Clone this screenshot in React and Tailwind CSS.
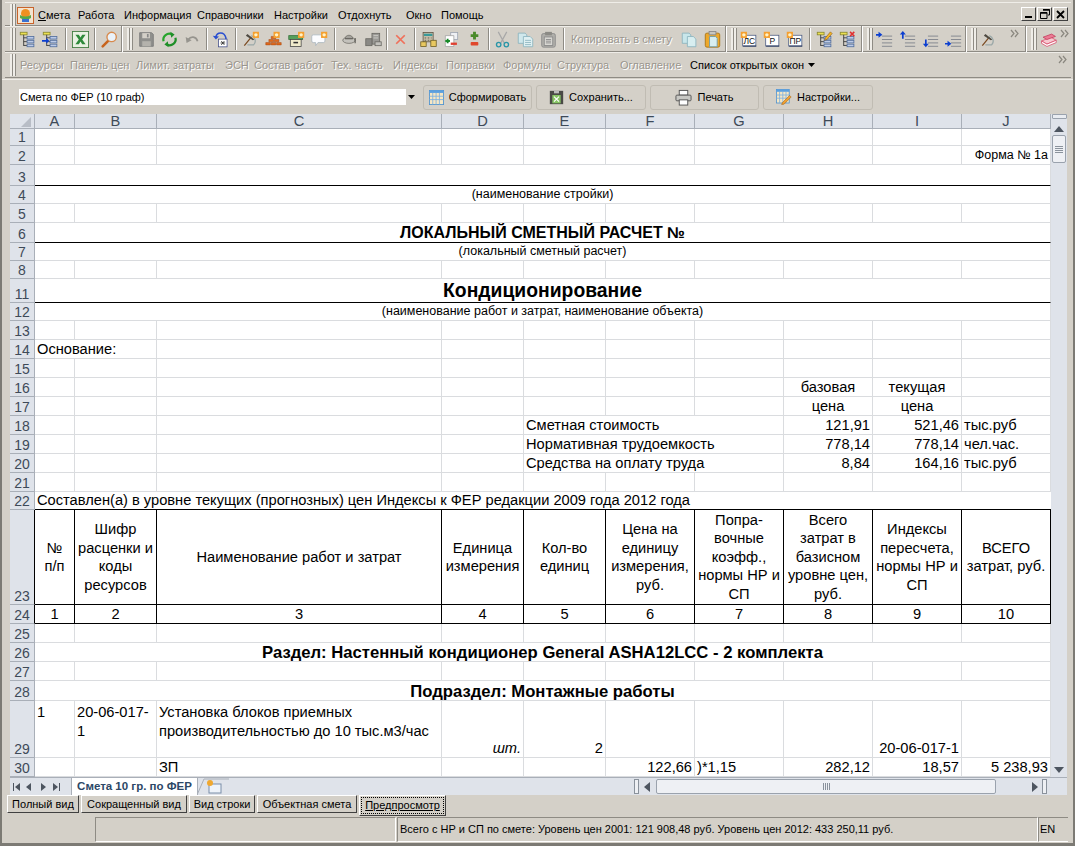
import React from 'react'

const Badge = ({ x = 12, y = 0 }) => (
  <g>
    <rect x={x} y={y} width="8" height="8" fill="#f5a030" />
    <circle cx={x + 4} cy={y + 4} r="2.2" fill="#fff3c8" />
  </g>
)

const Tree = ({ children }) => (
  <svg width="20" height="20" viewBox="0 0 20 20">
    <rect x="1.5" y="1.5" width="8" height="3" fill="#ece050" stroke="#8c8a30" />
    <path d="M5.5 4.5V17.5M5.5 8h4M5.5 12.5h4M5.5 17h4" stroke="#333" fill="none" />
    <rect x="9.5" y="6.5" width="8" height="3" fill="#bccbe8" stroke="#55709e" />
    <rect x="9.5" y="11" width="8" height="3" fill="#bccbe8" stroke="#55709e" />
    <rect x="9.5" y="15.5" width="8" height="3" fill="#bccbe8" stroke="#55709e" />
    {children}
  </svg>
)

const IconTree = () => <Tree />
const IconTreeArrow = () => (
  <Tree>
    <path d="M0 10.5h5V8l3.5 3.5L5 15v-2.5H0z" fill="#0c3fd0" />
  </Tree>
)
const IconTreePencil = () => (
  <Tree>
    <path d="M11 8l6-7 2 2-6 7-3 1z" fill="#f2b428" stroke="#7a4a10" strokeWidth=".6" />
  </Tree>
)
const IconTreeX = () => (
  <Tree>
    <path d="M13 1l5 5M18 1l-5 5" stroke="#e03030" strokeWidth="1.8" />
  </Tree>
)

const IconExcel = () => (
  <svg width="20" height="20" viewBox="0 0 20 20">
    <rect x=".5" y=".5" width="19" height="19" fill="#e9f1e2" stroke="#3d7a3d" />
    <path d="M4 4.5h4l2 3.2 2-3.2h4l-4 5.5 4 5.500h-4l-2-3.200-2 3.200H4l4-5.500z" fill="#2e8a3a" />
  </svg>
)

const IconSearch = () => (
  <svg width="20" height="20" viewBox="0 0 20 20">
    <path d="M9 11l-7 7" stroke="#c8641c" strokeWidth="3" strokeLinecap="round" />
    <circle cx="12.5" cy="7" r="5.5" fill="#eaf2fa" stroke="#d88a4c" strokeWidth="1.6" />
  </svg>
)

const IconSave = () => (
  <svg width="20" height="20" viewBox="0 0 20 20">
    <path d="M2 2h14l2 2v14H2z" fill="#8f8f8c" stroke="#777" />
    <rect x="5" y="2.5" width="9" height="6" fill="#d4d0c8" />
    <rect x="10.5" y="3.5" width="2" height="4" fill="#888" />
    <rect x="5" y="12" width="10" height="6" fill="#b4b2ac" />
  </svg>
)

const IconRefresh = () => (
  <svg width="20" height="20" viewBox="0 0 20 20" fill="none">
    <path d="M3 12a7 7 0 0 1 10-8" stroke="#27a52c" strokeWidth="2.6" />
    <path d="M17 8a7 7 0 0 1-10 8" stroke="#1f8f28" strokeWidth="2.6" />
    <path d="M11 1l5 3-4 4zM9 19l-5-3 4-4z" fill="#1f8f28" />
  </svg>
)

const IconUndo = () => (
  <svg width="20" height="20" viewBox="0 0 20 20" fill="none">
    <path d="M5 10c3-4 9-4 11 2" stroke="#96948e" strokeWidth="2" />
    <path d="M2 7l1 7 6-3z" fill="#96948e" />
  </svg>
)

const IconUndoDoc = () => (
  <svg width="20" height="22" viewBox="0 0 20 22" fill="none">
    <path d="M4 8c1-7 11-8 13 1v3" stroke="#2a4fd0" strokeWidth="2" />
    <path d="M0 6l4 5 4-4z" fill="#2a4fd0" />
    <rect x="7.5" y="10.5" width="11" height="10" fill="#fff" stroke="#45508a" />
    <path d="M11 13l4 5M15 13l-4 5M10 15.5h6" stroke="#222" />
  </svg>
)

const IconHammer = ({ badge = true }) => (
  <svg width="22" height="20" viewBox="0 0 22 20" fill="none">
    <path d="M3 18L12 7" stroke="#7a4a20" strokeWidth="1.6" />
    <path d="M7 3l9 7-2 1-9-6z" fill="#4e4a42" />
    <path d="M12 5c5 2 7 8 3 12H7" stroke="#9aa8a8" strokeWidth="1.6" />
    {badge && <Badge x={14} y={0} />}
  </svg>
)

const IconBricks = () => (
  <svg width="22" height="20" viewBox="0 0 22 20">
    <path d="M1 14h6v3H1zM8 14h6v3H8zM15 14h6v3h-6zM5 10h6v3H5zM12 10h6v3h-6zM8 6h6v3H8z" fill="#e0691c" stroke="#a04410" strokeWidth=".6" />
    <Badge x={11} y={0} />
  </svg>
)

const IconBox = () => (
  <svg width="22" height="20" viewBox="0 0 22 20">
    <rect x="1" y="5" width="18" height="5" fill="#55a05a" stroke="#35703a" />
    <rect x="3" y="10" width="14" height="9" fill="#f1ebcc" stroke="#444" />
    <rect x="7" y="13" width="6" height="2" fill="#333" />
    <Badge x={13} y={0} />
  </svg>
)

const IconBubble = () => (
  <svg width="22" height="20" viewBox="0 0 22 20">
    <path d="M3 4h13q2 0 2 2v6q0 2-2 2H9l-3 4v-4H3q-2 0-2-2V6q0-2 2-2z" fill="#fbfcff" stroke="#a8b4bc" />
    <Badge x={13} y={0} />
  </svg>
)

const IconHat = () => (
  <svg width="22" height="20" viewBox="0 0 22 20" fill="none">
    <ellipse cx="9" cy="11" rx="8" ry="4" fill="#c4c2bc" stroke="#6e6c66" />
    <path d="M4 9c0-6 10-6 10 0" fill="#a4a29c" stroke="#6e6c66" />
    <path d="M4 9h10M17 8v7" stroke="#55534e" strokeWidth="1.4" />
  </svg>
)

const IconBlocks = () => (
  <svg width="22" height="20" viewBox="0 0 22 20">
    <rect x="9" y="2" width="10" height="14" fill="#9b9a96" stroke="#66655f" />
    <rect x="1" y="9" width="8" height="9" fill="#8a8985" stroke="#66655f" />
    <rect x="13" y="13" width="8" height="5" fill="#c2c1bc" stroke="#66655f" />
    <path d="M11 5h6M11 8h6" stroke="#d8d7d2" />
  </svg>
)

const IconClose = () => (
  <svg width="18" height="18" viewBox="-3 -3 24 24">
    <path d="M3 3l12 12M15 3L3 15" stroke="#f0705a" strokeWidth="2.400" />
  </svg>
)

const IconCalc = () => (
  <svg width="22" height="20" viewBox="0 0 22 20">
    <rect x="4" y="1" width="13" height="12" fill="#c8bfa8" stroke="#5a5040" />
    <rect x="5" y="2.5" width="11" height="3" fill="#3a9a9a" />
    <path d="M6 8h2M10 8h2M14 8h1M6 11h2M10 11h2" stroke="#444" />
    <rect x="1" y="13" width="7" height="6" fill="#e8c860" stroke="#6a5a20" />
    <rect x="14" y="11" width="7" height="8" fill="#e8c860" stroke="#6a5a20" />
  </svg>
)

const IconDocPlus = () => (
  <svg width="22" height="20" viewBox="0 0 22 20">
    <rect x="10" y="1" width="9" height="9" fill="#eef0f4" stroke="#9aa2b0" />
    <path d="M3 5h11v14H3z" fill="#fff" stroke="#a0a0a0" />
    <path d="M3 12h6M6 9v6" stroke="#188a28" strokeWidth="2.4" />
    <rect x="10" y="14" width="8" height="3" fill="#e04030" />
  </svg>
)

const IconPlusMinus = () => (
  <svg width="18" height="20" viewBox="0 0 18 20">
    <path d="M9 1v9M4.5 5.5h9" stroke="#4a8a2a" strokeWidth="3.4" />
    <rect x="4.5" y="13" width="9" height="4" rx="1" fill="#e0482c" />
  </svg>
)

const IconScissors = () => (
  <svg width="20" height="20" viewBox="0 0 20 20" fill="none">
    <path d="M5 1l7 13M15 1L8 14" stroke="#a8a8a8" strokeWidth="1.4" />
    <circle cx="5.5" cy="16" r="2.6" stroke="#2a96a8" strokeWidth="1.6" />
    <circle cx="14.5" cy="16" r="2.6" stroke="#2a96a8" strokeWidth="1.6" />
  </svg>
)

const IconCopy = () => (
  <svg width="20" height="20" viewBox="0 0 20 20">
    <path d="M1.5 2.5h8l2 2v10h-10z" fill="#d0e8ec" stroke="#8ab4be" />
    <path d="M7.5 6.5h8l3 3v9h-11z" fill="#dff0f2" stroke="#8ab4be" />
    <path d="M9.5 11h7M9.5 13.5h7M9.5 16h7" stroke="#8ab4be" />
  </svg>
)

const IconPasteGray = () => (
  <svg width="20" height="20" viewBox="0 0 20 20">
    <rect x="2" y="3" width="16" height="16" rx="2" fill="#b0afaa" stroke="#888" />
    <rect x="6" y="1" width="8" height="4" fill="#8c8b86" />
    <rect x="5" y="7" width="10" height="10" fill="#d8d7d2" stroke="#888" />
    <path d="M7 10h6M7 12h6M7 14h6" stroke="#888" />
  </svg>
)

const IconCopyBlank = () => (
  <svg width="20" height="20" viewBox="0 0 20 20">
    <path d="M1.5 2.5h8l2 2v10h-10z" fill="#c8e6ea" stroke="#8ab4be" />
    <path d="M7.5 6.5h7l3 3v9h-10z" fill="#d8eef0" stroke="#8ab4be" />
  </svg>
)

const IconPaste = () => (
  <svg width="20" height="20" viewBox="0 0 20 20">
    <rect x="1.5" y="2.5" width="17" height="16.5" rx="2" fill="#eda82a" stroke="#a87010" />
    <rect x="6" y="0.5" width="8" height="4" fill="#c8c6c0" stroke="#888" />
    <path d="M6.5 6.5h7l2 2v10h-9z" fill="#d8eef0" stroke="#6a9aa6" />
  </svg>
)

const IconDocLabel = ({ label }) => (
  <svg width="22" height="20" viewBox="0 0 22 20">
    <rect x="3.5" y="4.5" width="17" height="14" fill="#fff" stroke="#4a5a80" />
    <path d="M4 18.500h17" stroke="#2a3a60" strokeWidth="1.400" />
    <text x="12" y="16" textAnchor="middle" fontSize="11" fontFamily="'Liberation Sans',sans-serif" fill="#111">{label}</text>
    <Badge x={1} y={0} />
  </svg>
)

const Lines = ({ children }) => (
  <svg width="20" height="20" viewBox="0 0 20 20">
    <path d="M7 6h12M7 10h12M7 14h12M7 18h12" stroke="#7a7e88" />
    {children}
  </svg>
)
const IconIndent1 = () => <Lines><path d="M0 3.500h3V1l4.500 3.500L3 8V5.500H0z" fill="#0c3fd0" /></Lines>
const IconIndent2 = () => <Lines><path d="M3.500 9V4H1l3.500-4L8 4H5.500v5z" fill="#0c3fd0" /></Lines>
const IconIndent3 = () => <Lines><path d="M3.500 10v5H1l3.500 4L8 15H5.500v-5z" fill="#0c3fd0" /></Lines>
const IconIndent4 = () => <Lines><path d="M0 14h3v-2.500L7.500 15 3 18.500V16H0z" fill="#0c3fd0" /></Lines>

const IconBooks = () => (
  <svg width="22" height="20" viewBox="0 0 22 20">
    <path d="M2 12l12-5 7 4-12 5z" fill="#f8c8d0" stroke="#d84a6a" />
    <path d="M2 12v3l7 4 12-5v-3l-12 5z" fill="#fff" stroke="#d84a6a" />
    <path d="M4 7l11-4 5 3-11 4z" fill="#ec7a94" stroke="#c03a5a" />
  </svg>
)

const Chevrons = () => (
  <svg width="10" height="9" viewBox="0 0 10 9" fill="none" className="self-start mt-[2px] shrink-0">
    <path d="M1 1l3 3.500-3 3.500M5 1l3 3.500-3 3.500" stroke="#8a877f" strokeWidth="1.200" />
  </svg>
)

const IconGrid = () => (
  <svg width="15" height="15" viewBox="0 0 18 18">
    <rect x=".5" y=".5" width="17" height="17" fill="#f6e7c4" stroke="#4a90d0" />
    <rect x=".5" y=".5" width="17" height="3" fill="#5aa0e0" />
    <path d="M4.500 3.500v14M8.500 3.500v14M12.500 3.500v14M.5 7.500h17M.5 11.500h17" stroke="#7ab0e0" />
  </svg>
)

const IconSaveXls = () => (
  <svg width="15" height="15" viewBox="0 0 18 18">
    <rect x="1" y="1" width="16" height="16" fill="#4a4a46" />
    <rect x="4" y="6" width="10" height="10" fill="#86c464" />
    <path d="M6 8l6 6M12 8l-6 6" stroke="#fff" strokeWidth="1.400" />
    <rect x="6" y="1" width="6" height="3" fill="#bbb" />
  </svg>
)

const IconPrinter = () => (
  <svg width="17" height="17" viewBox="0 0 18 18">
    <rect x="4.500" y="1.500" width="9" height="5" fill="#fff" stroke="#555" />
    <rect x="1" y="6.500" width="16" height="6" rx="1" fill="#c8c8c4" stroke="#555" />
    <rect x="4.500" y="11.500" width="9" height="5.500" fill="#fff" stroke="#555" />
  </svg>
)

const IconGridPencil = () => (
  <svg width="16" height="16" viewBox="0 0 20 20">
    <rect x=".5" y=".5" width="16" height="17" fill="#f6e7c4" stroke="#4a90d0" />
    <rect x=".5" y=".5" width="16" height="3" fill="#5aa0e0" />
    <path d="M4.500 3.500v14M8.500 3.500v14M12.500 3.500v14M.5 7.500h16M.5 11.500h16" stroke="#7ab0e0" />
    <path d="M8 17l9-9 2 2-9 9-3 .5z" fill="#f0a030" stroke="#9a5a10" strokeWidth=".6" />
  </svg>
)

const IconLogo = () => (
  <svg width="17" height="17" viewBox="0 0 17 17">
    <rect x=".5" y=".5" width="16" height="16" fill="#f4e4d0" stroke="#c8642c" />
    <circle cx="8.500" cy="6.500" r="4.500" fill="#f09020" />
    <path d="M3 8q5 3 11 0v3q-5 3-11 0z" fill="#58a848" />
    <path d="M5 12h7v3H5z" fill="#3a70d0" />
  </svg>
)

const Btn = ({ children }) => (
  <div className="w-[23px] h-[24px] flex items-center justify-center shrink-0 [&>svg]:w-[17px] [&>svg]:h-[17px]">{children}</div>
)

// etched separator inside a toolbar
const Sep = ({ w }) => (
  <div className={`${w} h-[22px] flex justify-center shrink-0`}>
    <div className="w-[2px] h-full border-l border-[#8e8b84] border-r border-r-white" />
  </div>
)

const Grip = () => (
  <div className="w-[6px] h-[22px] shrink-0 flex">
    <div className="w-[3px] h-full bg-[#efede8] border-r border-[#8e8b84]" />
    <div className="w-[3px] h-full bg-[#efede8] border-r border-[#8e8b84]" />
  </div>
)

// divides two toolbars on one band
const BandEnd = () => <div className="w-[2px] h-[26px] border-l border-[#8e8b84] border-r border-r-white shrink-0" />

const menu = [
  ['w-[40px]', 'Смета'],
  ['w-[46px]', 'Работа'],
  ['w-[73px]', 'Информация'],
  ['w-[77px]', 'Справочники'],
  ['w-[64px]', 'Настройки'],
  ['w-[68px]', 'Отдохнуть'],
  ['w-[35px]', 'Окно'],
  ['w-[60px]', 'Помощь'],
]

const links = [
  ['w-[50px]', 'Ресурсы'],
  ['w-[66px]', 'Панель цен'],
  ['w-[89px]', 'Лимит. затраты'],
  ['w-[29px]', 'ЭСН'],
  ['w-[77px]', 'Состав работ'],
  ['w-[62px]', 'Тех. часть'],
  ['w-[53px]', 'Индексы'],
  ['w-[57px]', 'Поправки'],
  ['w-[54px]', 'Формулы'],
  ['w-[63px]', 'Структура'],
  ['w-[70px]', 'Оглавление'],
]

const WinBtn = ({ children }) => (
  <div className="w-[15px] h-[14px] bg-[#d4d0c8] border border-white border-r-[#404040] border-b-[#404040] flex items-center justify-center shrink-0">
    {children}
  </div>
)

const PanelBtn = ({ w, icon, children }) => (
  <div className={`${w} h-[25px] shrink-0 border border-[#c0bcb3] rounded-[3px] flex items-center justify-center gap-[5px]`}>
    {icon}
    <span>{children}</span>
  </div>
)

const grid = 'border-r border-b border-[#dadcdf] px-[2px] align-bottom whitespace-nowrap leading-[17px]'
const black = 'border-r border-b border-black px-[1px] text-center align-middle leading-[18.500px]'
const small = 'text-center text-[12.500px]'
const heading = 'text-center font-bold text-[16.670px]'

const Blank = ({ n }) => Array.from({ length: n }, (_, i) => <td key={i} className={grid} />)

const Row = ({ n, h, children, dark }) => (
  <tr className={h}>
    <th className={`bg-[#dfe3ea] border-r border-b ${dark ? 'border-r-black border-b-[#a9afb8]' : 'border-[#a9afb8]'} p-0 align-bottom text-center font-normal text-[14px] leading-[16px] text-[#3e4a58]`}>
      {n}
    </th>
    {children}
  </tr>
)

const columns = ['A', 'B', 'C', 'D', 'E', 'F', 'G', 'H', 'I', 'J']

const Sheet = () => (
  <table className="table-fixed border-separate border-spacing-0 w-[1041px] text-[14.670px] text-black font-['Liberation_Sans',sans-serif]">
    <colgroup>
      <col className="w-[25px]" />
      <col className="w-[40px]" />
      <col className="w-[82px]" />
      <col className="w-[285px]" />
      <col className="w-[82px]" />
      <col className="w-[82px]" />
      <col className="w-[89px]" />
      <col className="w-[89px]" />
      <col className="w-[89px]" />
      <col className="w-[89px]" />
      <col className="w-[89px]" />
    </colgroup>
    <tbody>
      <tr className="h-[15px]">
        <th className="bg-[#dfe3ea] border-r border-b border-[#a9afb8] p-0 align-bottom">
          <svg width="12" height="12" viewBox="0 0 12 12" className="ml-auto mr-[2px]">
            <path d="M11 1v10H1z" fill="#b8bdc6" />
          </svg>
        </th>
        {columns.map((c) => (
          <th key={c} className="bg-[#dfe3ea] border-r border-b border-[#a9afb8] p-0 font-normal text-[14.670px] leading-[14px] text-[#3e4a58] align-middle">
            {c}
          </th>
        ))}
      </tr>
      <Row n="1" h="h-[16px]"><Blank n={10} /></Row>
      <Row n="2" h="h-[19px]">
        <Blank n={9} />
        <td className={`${grid} text-right text-[12.500px]`}>Форма № 1а</td>
      </Row>
      <Row n="3" h="h-[21px]"><td colSpan={10} className="border-r border-b border-r-[#dadcdf] border-b-black" /></Row>
      <Row n="4" h="h-[18px]"><td colSpan={10} className={`${grid} ${small}`}>(наименование стройки)</td></Row>
      <Row n="5" h="h-[19px]"><Blank n={10} /></Row>
      <Row n="6" h="h-[20px]"><td colSpan={10} className="border-r border-b border-r-[#dadcdf] border-b-black text-center font-bold text-[16px] leading-[18px] align-bottom">ЛОКАЛЬНЫЙ СМЕТНЫЙ РАСЧЕТ №</td></Row>
      <Row n="7" h="h-[18px]"><td colSpan={10} className={`${grid} ${small}`}>(локальный сметный расчет)</td></Row>
      <Row n="8" h="h-[18px]"><Blank n={10} /></Row>
      <Row n="11" h="h-[24px]"><td colSpan={10} className="border-r border-b border-r-[#dadcdf] border-b-black text-center font-bold text-[19.330px] leading-[22px] align-bottom">Кондиционирование</td></Row>
      <Row n="12" h="h-[18px]"><td colSpan={10} className={`${grid} ${small}`}>(наименование работ и затрат, наименование объекта)</td></Row>
      <Row n="13" h="h-[19px]"><Blank n={10} /></Row>
      <Row n="14" h="h-[19px]">
        <td colSpan={2} className={`${grid} !leading-[18px]`}>Основание:</td>
        <Blank n={8} />
      </Row>
      <Row n="15" h="h-[19px]"><Blank n={10} /></Row>
      <Row n="16" h="h-[19px]">
        <Blank n={7} />
        <td className={`${grid} text-center`}>базовая</td>
        <td className={`${grid} text-center`}>текущая</td>
        <Blank n={1} />
      </Row>
      <Row n="17" h="h-[19px]">
        <Blank n={7} />
        <td className={`${grid} text-center`}>цена</td>
        <td className={`${grid} text-center`}>цена</td>
        <Blank n={1} />
      </Row>
      {[
        ['18', 'Сметная стоимость', '121,91', '521,46', 'тыс.руб'],
        ['19', 'Нормативная трудоемкость', '778,14', '778,14', 'чел.час.'],
        ['20', 'Средства на оплату труда', '8,84', '164,16', 'тыс.руб'],
      ].map(([n, label, base, cur, unit]) => (
        <Row key={n} n={n} h="h-[19px]">
          <Blank n={4} />
          <td colSpan={3} className={grid}>{label}</td>
          <td className={`${grid} text-right`}>{base}</td>
          <td className={`${grid} text-right`}>{cur}</td>
          <td className={grid}>{unit}</td>
        </Row>
      ))}
      <Row n="21" h="h-[19px]"><Blank n={10} /></Row>
      <Row n="22" h="h-[18px]">
        <td colSpan={10} className="border-b border-black px-[2px] align-bottom whitespace-nowrap leading-[17px]">
          Составлен(а) в уровне текущих (прогнозных) цен Индексы к ФЕР редакции 2009 года 2012 года
        </td>
      </Row>
      <Row n="23" h="h-[95px]" dark>
        <td className={black}>№<br />п/п</td>
        <td className={black}>Шифр<br />расценки и<br />коды<br />ресурсов</td>
        <td className={black}>Наименование работ и затрат</td>
        <td className={black}>Единица<br />измерения</td>
        <td className={black}>Кол-во<br />единиц</td>
        <td className={black}>Цена на<br />единицу<br />измерения,<br />руб.</td>
        <td className={black}>Попра-<br />вочные<br />коэфф.,<br />нормы НР и<br />СП</td>
        <td className={black}>Всего<br />затрат в<br />базисном<br />уровне цен,<br />руб.</td>
        <td className={black}>Индексы<br />пересчета,<br />нормы НР и<br />СП</td>
        <td className={black}>ВСЕГО<br />затрат, руб.</td>
      </Row>
      <Row n="24" h="h-[19px]" dark>
        {[1, 2, 3, 4, 5, 6, 7, 8, 9, 10].map((c) => (
          <td key={c} className={`${black} !leading-[17px]`}>{c}</td>
        ))}
      </Row>
      <Row n="25" h="h-[19px]"><Blank n={10} /></Row>
      <Row n="26" h="h-[19px]"><td colSpan={10} className={`${grid} ${heading}`}>Раздел: Настенный кондиционер General ASHA12LCC - 2 комплекта</td></Row>
      <Row n="27" h="h-[19px]"><Blank n={10} /></Row>
      <Row n="28" h="h-[20px]"><td colSpan={10} className={`${grid} ${heading}`}>Подраздел: Монтажные работы</td></Row>
      <Row n="29" h="h-[57px]">
        <td className={`${grid} !align-top pt-[2px] leading-[19px]`}>1</td>
        <td className={`${grid} !align-top pt-[2px] !whitespace-normal leading-[19px]`}>20-06-017-<br />1</td>
        <td className={`${grid} !align-top pt-[2px] leading-[19px]`}>Установка блоков приемных<br />производительностью до 10 тыс.м3/час</td>
        <td className={`${grid} text-right italic`}>шт.</td>
        <td className={`${grid} text-right`}>2</td>
        <Blank n={3} />
        <td className={`${grid} text-right`}>20-06-017-1</td>
        <Blank n={1} />
      </Row>
      <Row n="30" h="h-[19px]">
        <Blank n={2} />
        <td className={grid}>ЗП</td>
        <Blank n={2} />
        <td className={`${grid} text-right`}>122,66</td>
        <td className={grid}>)*1,15</td>
        <td className={`${grid} text-right`}>282,12</td>
        <td className={`${grid} text-right`}>18,57</td>
        <td className={`${grid} text-right`}>5 238,93</td>
      </Row>
    </tbody>
  </table>
)

const VScroll = () => (
  <div className="w-[16px] h-full bg-[#dfe3ea] flex flex-col items-center shrink-0">
    <div className="w-[15px] h-[5px] bg-[#e9ecf1] border border-[#9aa2ad] rounded-b-[1px]" />
    <svg width="10" height="6" viewBox="0 0 10 6" className="mt-[7px]"><path d="M5 0l5 6H0z" fill="#4d5560" /></svg>
    <div className="w-[14px] h-[28px] mt-[3px] bg-[#eef0f4] border border-[#9aa2ad] rounded-[2px] flex flex-col items-center justify-center gap-[1px]">
      <div className="w-[8px] h-px bg-[#8a929c]" />
      <div className="w-[8px] h-px bg-[#8a929c]" />
      <div className="w-[8px] h-px bg-[#8a929c]" />
      <div className="w-[8px] h-px bg-[#8a929c]" />
    </div>
    <div className="flex-1" />
    <svg width="10" height="6" viewBox="0 0 10 6" className="mb-[4px]"><path d="M5 6l5-6H0z" fill="#4d5560" /></svg>
  </div>
)

const SheetTabs = () => (
  <div className="h-[18px] bg-[#dfe3ea] border-t border-[#a9afb8] flex items-center shrink-0 text-[12px]">
    <svg width="59" height="10" viewBox="0 0 59 10" className="shrink-0 ml-[2px]">
      <path d="M1 1h1v8H1zM8 1v8L3 5zM19 1v8l-5-4zM29 1v8l5-4zM41 1v8l5-4zM47 1h1v8h-1z" fill="#4d5560" />
    </svg>
    <div className="w-[127px] h-full bg-white border-x border-[#a9afb8] flex items-center justify-center font-bold text-[#2c4766] font-['Liberation_Sans',sans-serif] text-[11.500px] shrink-0">
      Смета 10 гр. по ФЕР
    </div>
    <svg width="32" height="17" viewBox="0 0 32 17" className="shrink-0 -ml-[1px]">
      <path d="M0 17L7 1h25" fill="none" stroke="#a9afb8" />
      <rect x="12" y="6" width="12" height="9" fill="#eef3fa" stroke="#7a8ea8" />
      <circle cx="13" cy="5" r="3" fill="#f0a830" />
    </svg>
    <div className="w-[405px] shrink-0" />
    <div className="w-[5px] h-[15px] bg-[#eef0f4] border border-[#8a929c] shrink-0" />
    <div className="w-[5px] shrink-0" />
    <svg width="6" height="10" viewBox="0 0 6 10" className="shrink-0"><path d="M0 5l6-5v10z" fill="#4d5560" /></svg>
    <div className="w-[340px] h-[15px] ml-[6px] bg-[#eef0f4] border border-[#9aa2ad] rounded-[2px] flex items-center justify-center gap-[1px] shrink-0">
      <div className="w-px h-[7px] bg-[#8a929c]" />
      <div className="w-px h-[7px] bg-[#8a929c]" />
      <div className="w-px h-[7px] bg-[#8a929c]" />
      <div className="w-px h-[7px] bg-[#8a929c]" />
    </div>
    <div className="w-[36px] shrink-0" />
    <svg width="6" height="10" viewBox="0 0 6 10" className="shrink-0"><path d="M6 5L0 0v10z" fill="#4d5560" /></svg>
    <div className="w-[5px] h-[15px] ml-[4px] bg-[#eef0f4] border border-[#8a929c] shrink-0" />
  </div>
)

const ViewTab = ({ w, children }) => (
  <div className={`${w} h-[18px] bg-[#d4d0c8] border border-white border-r-[#404040] border-b-[#404040] flex items-center justify-center shrink-0`}>
    {children}
  </div>
)

export default function App() {
  return (
    <div className="w-[1075px] h-[846px] bg-[#d4d0c8] overflow-hidden flex flex-col text-[11px] text-black font-['Liberation_Sans',sans-serif] border-l-[2px] border-r-[2px] border-b-[3px] border-[#7c7a74] relative">
      {/* menu band */}
      <div className="h-[24px] mt-[2px] ml-[3px] mr-[2px] pt-[2px] border-t border-[#efede8] border-b border-b-[#8e8b84] flex items-center shrink-0">
        <div className="ml-[5px]"><Grip /></div>
        <div className="ml-[1px] mr-[4px] shrink-0"><IconLogo /></div>
        {menu.map(([w, t], i) => (
          <div key={t} className={`${w} shrink-0`}>
            {i === 0 ? <span><span className="underline">С</span>мета</span> : t}
          </div>
        ))}
        <div className="flex-1" />
        <div className="flex gap-[1px] mr-[3px] -mt-[2px]">
          <WinBtn><div className="w-[7px] h-[2px] bg-black mt-[6px] -ml-[1px]" /></WinBtn>
          <WinBtn>
            <svg width="10" height="10" viewBox="0 0 10 10" fill="none">
              <path d="M3 .5h6.500V6H8M.5 3.500H7v6H.5z" stroke="#000" />
              <path d="M3 1h6.500M.5 4H7" stroke="#000" strokeWidth="1.500" />
            </svg>
          </WinBtn>
          <WinBtn>
            <svg width="9" height="9" viewBox="0 0 9 9"><path d="M1 1l7 7M8 1L1 8" stroke="#000" strokeWidth="1.800" /></svg>
          </WinBtn>
        </div>
      </div>

      {/* main toolbar band */}
      <div className="h-[26px] ml-[3px] mr-[2px] border-t border-[#efede8] border-b border-b-[#8e8b84] flex items-center shrink-0">
        <div className="ml-[5px]"><Grip /></div>
        <Btn><IconTree /></Btn>
        <Btn><IconTreeArrow /></Btn>
        <Sep w="w-[7px]" />
        <Btn><IconExcel /></Btn>
        <Sep w="w-[6px]" />
        <Btn><IconSearch /></Btn>
        <BandEnd />
        <div className="w-[4px] shrink-0" />
        <Grip />
        <div className="w-[2px] shrink-0" />
        <Btn><IconSave /></Btn>
        <Btn><IconRefresh /></Btn>
        <Btn><IconUndo /></Btn>
        <Sep w="w-[5px]" />
        <Btn><IconUndoDoc /></Btn>
        <Sep w="w-[7px]" />
        <Btn><IconHammer /></Btn>
        <Btn><IconBricks /></Btn>
        <Btn><IconBox /></Btn>
        <Btn><IconBubble /></Btn>
        <Sep w="w-[8px]" />
        <Btn><IconHat /></Btn>
        <Btn><IconBlocks /></Btn>
        <Sep w="w-[4px]" />
        <Btn><IconClose /></Btn>
        <Sep w="w-[5px]" />
        <Btn><IconCalc /></Btn>
        <Btn><IconDocPlus /></Btn>
        <Btn><IconPlusMinus /></Btn>
        <Sep w="w-[5px]" />
        <Btn><IconScissors /></Btn>
        <Btn><IconCopy /></Btn>
        <Btn><IconPasteGray /></Btn>
        <Sep w="w-[7px]" />
        <div className="w-[111px] shrink-0 pl-[4px] text-[#9a968e] [text-shadow:1px_1px_0_#fff] whitespace-nowrap">Копировать в смету</div>
        <Btn><IconCopyBlank /></Btn>
        <Btn><IconPaste /></Btn>
        <div className="w-[1px] shrink-0" />
        <BandEnd />
        <div className="w-[4px] shrink-0" />
        <Grip />
        <Btn><IconDocLabel label="ЛС" /></Btn>
        <Btn><IconDocLabel label="Р" /></Btn>
        <Btn><IconDocLabel label="ПР" /></Btn>
        <Sep w="w-[7px]" />
        <Btn><IconTreePencil /></Btn>
        <Btn><IconTreeX /></Btn>
        <div className="w-[2px] shrink-0" />
        <BandEnd />
        <div className="w-[4px] shrink-0" />
        <Grip />
        <Btn><IconIndent1 /></Btn>
        <Btn><IconIndent2 /></Btn>
        <Btn><IconIndent3 /></Btn>
        <Btn><IconIndent4 /></Btn>
        <BandEnd />
        <div className="w-[4px] shrink-0" />
        <Grip />
        <Btn><IconHammer badge={false} /></Btn>
        <div className="w-[10px] shrink-0" />
        <Chevrons />
        <div className="w-[5px] shrink-0" />
        <BandEnd />
        <div className="w-[4px] shrink-0" />
        <Grip />
        <Btn><IconBooks /></Btn>
        <Chevrons />
      </div>

      {/* links band */}
      <div className="h-[26px] ml-[3px] mr-[2px] border-t border-[#efede8] border-b border-b-[#8e8b84] flex items-center shrink-0">
        <div className="ml-[5px]"><Grip /></div>
        <div className="w-[4px] shrink-0" />
        {links.map(([w, t]) => (
          <div key={t} className={`${w} shrink-0 whitespace-nowrap text-[#9a968e] [text-shadow:1px_1px_0_#fff]`}>{t}</div>
        ))}
        <div className="shrink-0 whitespace-nowrap">Список открытых окон</div>
        <svg width="7" height="4" viewBox="0 0 7 4" className="ml-[4px] shrink-0"><path d="M0 0h7L3.500 4z" fill="#000" /></svg>
        <div className="flex-1" />
        <div className="mr-[3px] self-start"><Chevrons /></div>
      </div>

      {/* report controls */}
      <div className="h-[35px] mt-[1px] pl-[17px] flex items-center shrink-0 border-t border-[#efede8]">
        <div className="w-[398px] h-[16px] bg-white flex items-center justify-between shrink-0">
          <span className="pl-[1px]">Смета по ФЕР (10 граф)</span>
          <div className="w-[11px] h-full bg-[#d4d0c8] flex items-center justify-center">
            <svg width="7" height="4" viewBox="0 0 7 4"><path d="M0 0h7L3.500 4z" fill="#000" /></svg>
          </div>
        </div>
        <div className="w-[6px] shrink-0" />
        <div className="flex gap-[4px]">
          <PanelBtn w="w-[109px]" icon={<IconGrid />}>Сформировать</PanelBtn>
          <PanelBtn w="w-[110px]" icon={<IconSaveXls />}>Сохранить...</PanelBtn>
          <PanelBtn w="w-[109px]" icon={<IconPrinter />}>Печать</PanelBtn>
          <PanelBtn w="w-[110px]" icon={<IconGridPencil />}>Настройки...</PanelBtn>
        </div>
      </div>

      {/* workbook */}
      <div className="ml-[8px] w-[1057px] flex flex-col shrink-0">
        <div className="h-[663px] flex overflow-hidden">
          <div className="w-[1041px] overflow-hidden bg-white shrink-0"><Sheet /></div>
          <VScroll />
        </div>
        <SheetTabs />
      </div>

      {/* view tabs */}
      <div className="h-[22px] ml-[5px] flex items-start gap-[2px] shrink-0">
        <ViewTab w="w-[72px]">Полный вид</ViewTab>
        <ViewTab w="w-[106px]">Сокращенный вид</ViewTab>
        <ViewTab w="w-[66px]">Вид строки</ViewTab>
        <ViewTab w="w-[100px]">Объектная смета</ViewTab>
        <div className="w-[87px] h-[21px] bg-[#d4d0c8] border border-white border-r-[#404040] border-b-[#404040] p-[1px] shrink-0">
          <div className="w-full h-full border border-dotted border-black flex items-center justify-center"><span className="underline">Предпросмотр</span></div>
        </div>
      </div>

      {/* status bar */}
      <div className="h-[25px] ml-[93px] flex shrink-0">
        <div className="w-[301px] h-full border border-[#8e8b84] border-r-white border-b-white shrink-0" />
        <div className="w-[641px] h-full ml-[1px] pl-[2px] border border-[#8e8b84] border-r-white border-b-white flex items-center whitespace-nowrap shrink-0">
          Всего с НР и СП по смете: Уровень цен 2001: 121 908,48 руб. Уровень цен 2012: 433 250,11 руб.
        </div>
        <div className="w-[30px] h-full border border-[#8e8b84] border-r-0 border-b-white flex items-center pl-[1px] shrink-0">EN</div>
      </div>
    </div>
  )
}
